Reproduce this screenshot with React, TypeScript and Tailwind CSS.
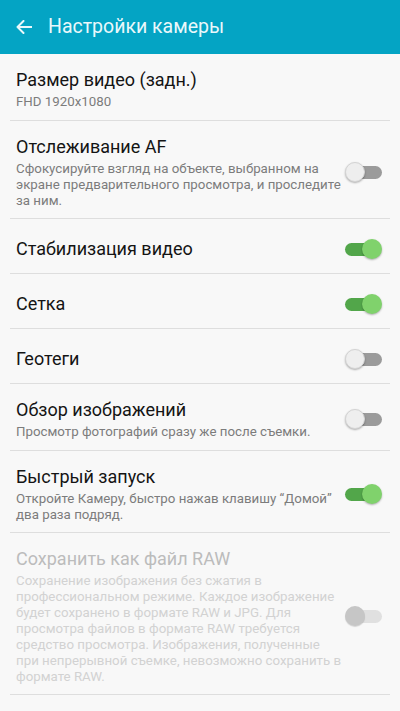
type Item = {
  title: string;
  desc?: string;
  toggle?: "on" | "off";
  disabled?: boolean;
};

const items: Item[] = [
  { title: "Размер видео (задн.)", desc: "FHD 1920x1080" },
  {
    title: "Отслеживание AF",
    desc: "Сфокусируйте взгляд на объекте, выбранном на экране предварительного просмотра, и проследите за ним.",
    toggle: "off",
  },
  { title: "Стабилизация видео", toggle: "on" },
  { title: "Сетка", toggle: "on" },
  { title: "Геотеги", toggle: "off" },
  {
    title: "Обзор изображений",
    desc: "Просмотр фотографий сразу же после съемки.",
    toggle: "off",
  },
  {
    title: "Быстрый запуск",
    desc: "Откройте Камеру, быстро нажав клавишу \u201CДомой\u201D два раза подряд.",
    toggle: "on",
  },
  {
    title: "Сохранить как файл RAW",
    desc: "Сохранение изображения без сжатия в профессиональном режиме. Каждое изображение будет сохранено в формате RAW и JPG. Для просмотра файлов в формате RAW требуется средство просмотра. Изображения, полученные при непрерывной съемке, невозможно сохранить в формате RAW.",
    toggle: "off",
    disabled: true,
  },
];

const Switch = ({ on, disabled }: { on: boolean; disabled?: boolean }) => {
  if (disabled) {
    return (
      <div className="relative h-[20px] w-[37px] shrink-0">
        <div className="absolute left-[3px] right-0 top-[4px] h-[13px] rounded-full bg-[#e0e0e0]" />
        <div className="absolute left-0 top-0 h-[20px] w-[20px] rounded-full bg-[#c6c6c6] shadow-[0_1px_1px_rgba(0,0,0,0.15)]" />
      </div>
    );
  }
  if (on) {
    return (
      <div className="relative h-[20px] w-[37px] shrink-0">
        <div className="absolute left-0 right-[3px] top-[4px] h-[13px] rounded-full bg-[#52a64a]" />
        <div className="absolute right-0 top-0 h-[20px] w-[20px] rounded-full bg-[#80d26c] shadow-[0_1px_2px_rgba(0,0,0,0.3)]" />
      </div>
    );
  }
  return (
    <div className="relative h-[20px] w-[37px] shrink-0">
      <div className="absolute left-[3px] right-0 top-[4px] h-[13px] rounded-full bg-[#9b9b9b]" />
      <div className="absolute left-0 top-0 h-[20px] w-[20px] rounded-full border border-[#d4d4d4] bg-[#eeeeee] shadow-[0_1px_2px_rgba(0,0,0,0.3)]" />
    </div>
  );
};

const Row = ({ item }: { item: Item }) => {
  const { title, desc, toggle, disabled } = item;
  // single-line rows sit a bit lower than centre in the original
  const pad = !desc
    ? "pt-[18px] pb-[12px]"
    : desc.length > 60
      ? "pt-[14px] pb-[9px]"
      : "pt-[14px] pb-[10px]";

  return (
    <div className={`flex items-center pl-4 pr-[18px] ${pad}`}>
      <div className="min-w-0 flex-1">
        <div
          className={
            disabled
              ? "text-[18px] leading-[24px] text-[#bcbcbc]"
              : "text-[18px] leading-[24px] text-[#141414]"
          }
        >
          {title}
        </div>
        {desc && (
          <div
            className={
              disabled
                ? "mt-[2px] text-[13.3px] leading-[16px] text-[#d2d2d2]"
                : "mt-[2px] text-[13.3px] leading-[16px] text-[#7c7c7c]"
            }
          >
            {desc}
          </div>
        )}
      </div>
      {toggle && <Switch on={toggle === "on"} disabled={disabled} />}
    </div>
  );
};

const App = () => {
  return (
    <div className="min-h-[711px] w-[400px] bg-[#f8f8f8] font-['Roboto',sans-serif]">
      <header className="flex h-[54px] items-center bg-[#04a4c4] pl-4">
        <svg width="16" height="14" viewBox="0 0 16 14" fill="none" className="shrink-0">
          <path
            d="M1.5 7H15.5M7.5 1L1.5 7L7.5 13"
            stroke="#eaf8fb"
            strokeWidth="2"
            strokeLinecap="round"
            strokeLinejoin="round"
          />
        </svg>
        <h1 className="ml-4 text-[19.5px] text-[#eaf8fb]">Настройки камеры</h1>
      </header>
      <div>
        {items.map((item, i) => (
          <div key={i}>
            <Row item={item} />
            <div className="mx-[10px] h-px bg-[#dedede]" />
          </div>
        ))}
      </div>
    </div>
  );
};

export default App;
